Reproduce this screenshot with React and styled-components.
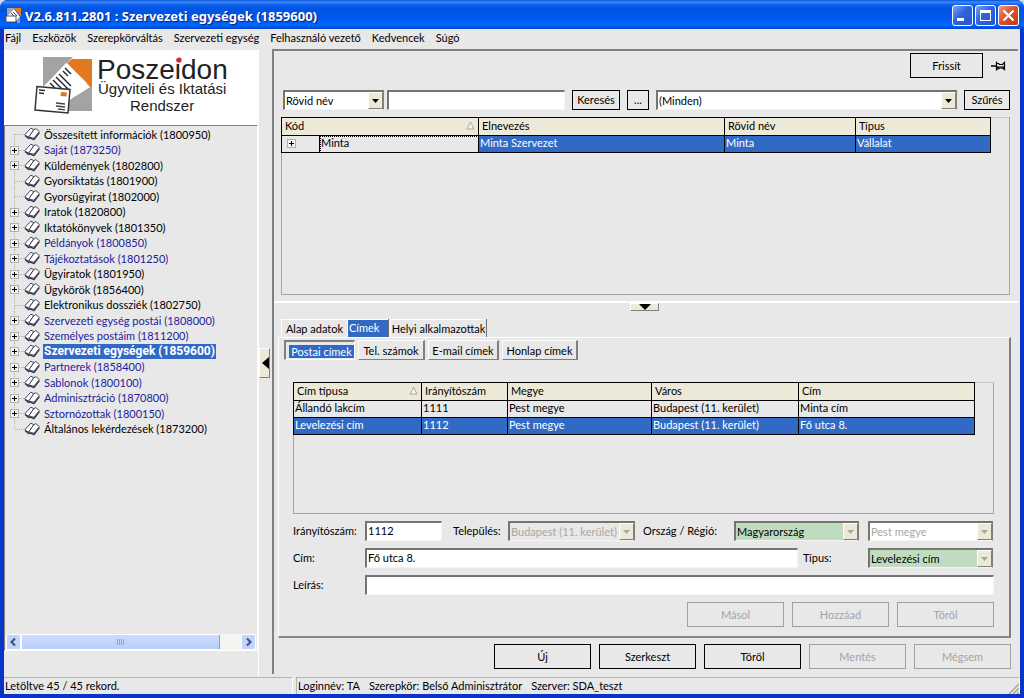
import React from "react";
import styled, { createGlobalStyle, css } from "styled-components";

const face = "#e8e8e8";
const header = "#ece9d8";
const blue = "#316ac5";
const sans = `Lato, "Liberation Sans", Arial, sans-serif`;

const Global = createGlobalStyle`
  * { box-sizing: border-box; }
  body { margin: 0; background: #c9dcf2; font: 11px/14px ${sans}; color: #000; }
  button, input, select { font: inherit; color: inherit; margin: 0; border-radius: 0; }
`;

const Window = styled.div`
  min-height: 100vh;
  display: flex;
  flex-direction: column;
  background: #0a34c8;
  border-radius: 8px 8px 0 0;
  overflow: hidden;
`;

const TitleBar = styled.header`
  height: 29px;
  display: flex;
  align-items: center;
  gap: 4px;
  padding: 2px 5px 0 6px;
  background: linear-gradient(#0a4fd0 0, #3a8bff 2px, #0a5eea 5px, #0054e3 9px, #0058ee 18px, #0067ff 25px, #0048d0 29px);
`;

const Title = styled.h1`
  flex: 1;
  margin: 0;
  font: bold 13px/16px "Noto Sans", sans-serif;
  color: #fff;
  text-shadow: 1px 1px 1px #0a1e78;
  white-space: nowrap;
`;

const CaptionButtons = styled.div`
  display: flex;
  gap: 2px;
`;

const CaptionButton = styled.button`
  width: 21px;
  height: 21px;
  padding: 0;
  border: 1px solid #fff;
  border-radius: 3px;
  background: ${(p) =>
    p.$close
      ? "linear-gradient(135deg, #f09a80, #e0512c 45%, #c03a18)"
      : "linear-gradient(135deg, #7da6f5, #2f62dd 45%, #2456d0)"};
  svg { display: block; }
`;

const Client = styled.div`
  flex: 1;
  display: flex;
  flex-direction: column;
  margin: 0 4px 4px;
  background: ${face};
`;

const MenuBar = styled.nav`
  height: 20px;
  display: flex;
  align-items: center;
  gap: 11px;
  padding: 0 1px 2px;
`;

const MenuItem = styled.button`
  padding: 0;
  border: 0;
  background: none;
  white-space: nowrap;
`;

const Body = styled.div`
  flex: 1;
  display: flex;
`;

const Sidebar = styled.aside`
  width: 254px;
  flex: none;
  display: flex;
  flex-direction: column;
  padding: 1px 0 26px;
`;

const Logo = styled.div`
  height: 75px;
  background: #fff;
  svg { display: block; }
`;

const TreePanel = styled.div`
  flex: 1;
  display: flex;
  flex-direction: column;
  justify-content: space-between;
  border: 1px solid #fff;
  border-top-color: #808080;
  border-left-color: #808080;
  padding: 0 1px;
`;

const Tree = styled.ul`
  margin: 0;
  padding: 0;
  list-style: none;
`;

const TreeRow = styled.li`
  height: 16px;
  display: flex;
  align-items: center;
  overflow: hidden;
  &:nth-child(even) { height: 15px; }
  > svg { flex: none; }
`;

const TreeLink = styled.a`
  margin-left: 3px;
  padding: 0 1px;
  line-height: 15px;
  text-decoration: none;
  white-space: nowrap;
  color: ${(p) => (p.$marked ? "#1c1c9c" : "#000")};
  ${(p) =>
    p.$selected &&
    css`
      background: ${blue};
      color: #fff;
      font-family: Roboto, sans-serif;
      font-weight: bold;
      font-size: 12px;
    `}
`;

const ScrollBar = styled.div`
  height: 16px;
  display: flex;
  background: #f4f4f0;
`;

const ScrollButton = styled.button`
  width: 15px;
  height: 16px;
  padding: 0;
  border: 1px solid #fff;
  border-radius: 2px;
  background: #c3d4fb;
  svg { display: block; }
`;

const ScrollTrack = styled.div`
  flex: 1;
  padding-right: 21px;
`;

const ScrollThumb = styled.div`
  height: 16px;
  display: flex;
  align-items: center;
  justify-content: center;
  gap: 1px;
  border: 1px solid #fff;
  border-right-color: #7f9be0;
  border-radius: 2px;
  background: linear-gradient(#cbdcff, #b9cefb);
`;

const Grip = styled.span`
  width: 1px;
  height: 6px;
  background: #8ca6e4;
`;

const Splitter = styled.div`
  width: 14px;
  flex: none;
  display: flex;
  align-items: center;
  border-left: 1px solid #fff;
`;

const SideHandle = styled.button`
  width: 11px;
  height: 30px;
  padding: 0;
  border: 1px solid #fff;
  border-right-color: #808080;
  border-bottom-color: #808080;
  background: ${header};
  svg { display: block; }
`;

const Main = styled.main`
  flex: 1;
  min-width: 0;
  display: flex;
  flex-direction: column;
  margin: 0 2px 3px 0;
  border-top: 2px solid #808080;
  border-left: 2px solid #808080;
`;

const TopPane = styled.section`
  flex: 1;
  display: flex;
  flex-direction: column;
  padding: 2px 8px 6px 7px;
  border-bottom: 2px solid #fff;
`;

const RefreshBar = styled.div`
  display: flex;
  justify-content: flex-end;
  align-items: center;
  gap: 8px;
  padding-right: 4px;
  margin-bottom: 12px;
`;

const SearchBar = styled.form`
  display: flex;
  gap: 7px;
  padding-left: 2px;
  margin-bottom: 7px;
`;

const SearchFields = styled.div`
  display: flex;
  gap: 3px;
`;

const Button = styled.button`
  flex: none;
  width: ${(p) => p.$width}px;
  height: ${(p) => (p.$small ? 20 : 25)}px;
  padding: 0;
  border: 1px solid #000;
  background: ${face};
  text-align: center;
  white-space: nowrap;
  &:disabled {
    color: #a4a4a4;
    border-color: #a0a0a0;
  }
`;

const sunken = css`
  height: 20px;
  border: 1px solid #f4f4f0;
  border-top: 2px solid #75756c;
  border-left: 2px solid #75756c;
`;

const TextBox = styled.input`
  ${sunken}
  width: ${(p) => (p.$width ? p.$width + "px" : "auto")};
  flex: ${(p) => (p.$width ? "none" : "1")};
  min-width: 0;
  padding: 0 1px 2px;
  background: #fff;
`;

const Combo = styled.span`
  ${sunken}
  border-right-color: #808078;
  flex: ${(p) => (p.$width ? "none" : "1")};
  width: ${(p) => (p.$width ? p.$width + "px" : "auto")};
  display: grid;
  grid-template-columns: 1fr 15px;
  background: ${(p) => p.$fill || "#fff"};
`;

const ComboSelect = styled.select`
  grid-area: 1 / 1 / 2 / 3;
  appearance: none;
  min-width: 0;
  padding: 0 14px 0 1px;
  border: 0;
  background: transparent;
  color: ${(p) => (p.$faded ? "#a8a8a0" : "#000")};
  opacity: 1;
`;

const ComboArrow = styled.span`
  grid-area: 1 / 2;
  display: flex;
  align-items: center;
  justify-content: center;
  pointer-events: none;
  border: 1px solid #fff;
  border-right-color: #808078;
  border-bottom-color: #808078;
  background: ${header};
`;

const GridBox = styled.div`
  flex: ${(p) => (p.$height ? "none" : "1")};
  height: ${(p) => (p.$height ? p.$height + "px" : "auto")};
  min-height: 80px;
  border: 1px solid #a8a4a4;
  border-top-color: #c8c4c4;
`;

const Grid = styled.table`
  width: calc(100% - 17px);
  margin: -1px 0 0 -1px;
  table-layout: fixed;
  border-collapse: collapse;
  th, td {
    border: 1px solid #000;
    font-weight: normal;
    text-align: left;
    overflow: hidden;
    white-space: nowrap;
  }
  th {
    height: 18px;
    padding: 0 3px 2px;
    background: ${header};
  }
  td {
    height: 17px;
    padding: 0 1px 2px;
  }
`;

const Row = styled.tr`
  ${(p) =>
    p.$selected &&
    css`
      background: ${blue};
      color: #fff;
    `}
`;

const PlainCell = styled.td`
  background: ${face};
  color: #000;
  ${(p) => p.$focused && "outline: 1px dotted #000; outline-offset: -1px;"}
`;

const HeaderText = styled.div`
  display: flex;
  justify-content: space-between;
  align-items: center;
`;

const Expander = styled.button`
  display: block;
  width: 9px;
  height: 9px;
  margin-left: ${(p) => (p.$inset ? 4 : 0)}px;
  padding: 0;
  border: 0;
  background: none;
  svg { display: block; }
`;

const BottomPane = styled.section`
  display: flex;
  flex-direction: column;
  padding: 0 7px 5px 4px;
`;

const DownHandle = styled.button`
  align-self: center;
  width: 29px;
  height: 8px;
  padding: 0;
  margin-bottom: 8px;
  border: 1px solid #fff;
  border-right-color: #808080;
  border-bottom-color: #808080;
  background: ${header};
  svg { display: block; margin: 0 auto; }
`;

const Tabs = styled.div`
  display: flex;
  padding-left: 3px;
`;

const Tab = styled.button`
  width: ${(p) => p.$width}px;
  height: 18px;
  padding: 0;
  border: solid #fff;
  border-width: 1px 0 0 1px;
  background: ${face};
  line-height: 14px;
  white-space: nowrap;
  box-shadow: ${(p) => (p.$last ? "1px 0 #707070" : "none")};
  ${(p) =>
    p.$selected &&
    css`
      padding: 0 0 2px 1px;
      text-align: left;
      background: ${blue};
      color: #fff;
      box-shadow: 1px 0 #707070;
      margin-right: 2px;
    `}
`;

const TabPanel = styled.div`
  display: flex;
  flex-direction: column;
  padding: 2px 15px 9px 14px;
  border: 1px solid #fff;
  border-right: 2px solid #857a80;
  border-bottom: 2px solid #858585;
  margin-bottom: 6px;
`;

const SubTabs = styled.div`
  display: flex;
  gap: 3px;
  margin: 0 0 22px -9px;
`;

const SubTab = styled.button`
  width: ${(p) => p.$width}px;
  height: 20px;
  padding: 2px 0 0;
  border: 1px solid #fff;
  border-right: 2px solid #808080;
  border-bottom: 1px solid #808080;
  background: ${face};
  white-space: nowrap;
  ${(p) =>
    p.$selected &&
    css`
      padding: 2px 0 0 1px;
      border: 2px solid #808080;
      border-right: 1px solid #fff;
      border-bottom: 1px solid #fff;
      span {
        display: block;
        margin: 0 0 0 2px;
        background: ${blue};
        color: #fff;
        line-height: 13px;
      }
    `}
`;

const Form = styled.form`
  display: flex;
  flex-direction: column;
  gap: 7px;
  padding-top: 7px;
`;

const FieldRow = styled.div`
  display: flex;
  align-items: center;
  padding-right: ${(p) => (p.$wide ? 0 : 1)}px;
`;

const Label = styled.label`
  flex: none;
  width: ${(p) => p.$width}px;
  padding-left: ${(p) => p.$indent || 0}px;
  white-space: nowrap;
`;

const Region = styled.div`
  display: flex;
  margin-left: 9px;
`;

const Buttons = styled.div`
  display: flex;
  justify-content: flex-end;
  gap: 8px;
`;

const StatusBar = styled.footer`
  height: 17px;
  display: flex;
  gap: 3px;
`;

const StatusCell = styled.div`
  width: ${(p) => (p.$width ? p.$width + "px" : "auto")};
  flex: ${(p) => (p.$width ? "none" : "1")};
  display: flex;
  align-items: center;
  gap: 9px;
  padding-left: 1px;
  border-top: 1px solid #b4b4a8;
  border-right: 1px solid #fff;
  border-left: ${(p) => (p.$width ? "0" : "1px solid #b4b4a8")};
  white-space: nowrap;
  svg { margin-left: auto; align-self: flex-end; }
`;

const PlusBox = () => (
  <svg width="9" height="9" viewBox="0 0 9 9" shapeRendering="crispEdges">
    <rect x="0.5" y="0.5" width="8" height="8" fill="#f4f4f4" stroke="#b0b0b0" />
    <path d="M2 4.5h5M4.5 2v5" stroke="#000" />
  </svg>
);

const Branch = styled.span`
  width: 14px;
  height: 16px;
  flex: none;
  display: grid;
  margin-left: 4px;
  > svg { grid-area: 1 / 1; }
  > button { grid-area: 1 / 1; margin-top: 4px; }
`;

const BranchLines = ({ first, last }) => (
  <svg width="14" height="16" viewBox="0 0 14 16" shapeRendering="crispEdges">
    <path
      d={`M4.5 ${first ? 8 : 0}V${last ? 8 : 16}M4.5 8.5H14`}
      stroke="#b4b4b4"
      strokeDasharray="1 1"
      fill="none"
    />
  </svg>
);

const BookIcon = () => (
  <svg width="16" height="14" viewBox="0 0 16 14" strokeLinejoin="round">
    <path d="M1 8.400 4.600 11.600 5.800 10.800 10 12.600 15.300 5.600" fill="none" stroke="#34344c" strokeWidth="1.400" />
    <path d="M0.800 7.800 6.800 1.200 9.800 2.600 4.600 10.200z" fill="#fff" stroke="#34344c" strokeWidth="0.900" />
    <path d="M4.800 10 9.800 2.800 11.800 1.600 15.400 4.600 9.900 11.200z" fill="#fff" stroke="#34344c" strokeWidth="0.900" />
  </svg>
);

const Triangle = ({ color = "#000" }) => (
  <svg width="7" height="4" viewBox="0 0 7 4">
    <path d="M0 0h7L3.500 4z" fill={color} />
  </svg>
);

const SortMark = () => (
  <svg width="9" height="9" viewBox="0 0 9 9">
    <path d="M4.500 1 1 8h7z" fill="#f6f4ea" stroke="#aca899" />
  </svg>
);

const PinIcon = () => (
  <svg width="15" height="12" viewBox="0 0 15 12">
    <path d="M0 6h5" stroke="#000" strokeWidth="1.500" />
    <path d="M5.500 1.500v9M5.500 3.500h2l1 1h3l2-2v7l-2-1.500h-3l-1 1h-2" stroke="#000" strokeWidth="1.200" fill="none" />
    <path d="M6 6.500h7v2.500l-1.500-1.500H8l-1 1H6z" fill="#000" />
  </svg>
);

const AppIcon = () => (
  <svg width="15" height="15" viewBox="0 0 15 15">
    <path d="M1 0h8L1 8z" fill="#a4a4a4" />
    <path d="M8 0h7v9z" fill="#e87a1c" />
    <path d="M1 8 8 1l6 8-5 5z" fill="#fff" />
    <path d="M5 5l4 4M7 4l4 4" stroke="#444" />
    <path d="M0 8h10v6H0z" fill="#fff" stroke="#333" strokeWidth="0.8" />
    <path d="M11 12l3-3v6h-3z" fill="#9a9a9a" />
  </svg>
);

const PoszeidonLogo = () => (
  <svg width="254" height="75" viewBox="0 0 254 75" fontFamily="Liberation Sans, Arial, sans-serif" fill="#222">
    <path d="M39 7h30L39 37z" fill="#a3a3a3" />
    <path d="M68 9h20v30L63 13z" fill="#e2791f" />
    <path d="M88 36v25H62V52z" fill="#a3a3a3" />
    <path d="M39 38 62 13 83 33 64 52z" fill="#fff" />
    <path
      d="M61 18l6 6M59 21l5 5M55 24l12 12M52 27l12 12M49 30l9 9M46 33l5 5"
      stroke="#2c2c3c"
      strokeWidth="1.500"
    />
    <path d="M33 36.500 66 39.500 64 63 31 60z" fill="#fff" stroke="#333" strokeWidth="1.500" />
    <path d="M35 40l6 .6M35 43l5 .5" stroke="#333" strokeWidth="1.500" />
    <path d="M57 42l6 .6-.5 4-6-.6z" fill="#e2791f" />
    <path d="M52 53l9 1M52 56l9 1M54 59l7 .8" stroke="#444" strokeWidth="1.300" />
    <text x="93" y="29" fontSize="28">Poszeidon</text>
    <text x="94" y="44" fontSize="15">Ügyviteli és Iktatási</text>
    <text x="126" y="61" fontSize="15">Rendszer</text>
    <circle cx="175" cy="10" r="2.600" fill="#d8203c" />
  </svg>
);

const tree = [
  { text: "Összesített információk (1800950)" },
  { text: "Saját (1873250)", plus: true, marked: true },
  { text: "Küldemények (1802800)", plus: true },
  { text: "Gyorsiktatás (1801900)" },
  { text: "Gyorsügyirat (1802000)" },
  { text: "Iratok (1820800)", plus: true },
  { text: "Iktatókönyvek (1801350)", plus: true },
  { text: "Példányok (1800850)", plus: true, marked: true },
  { text: "Tájékoztatások (1801250)", plus: true, marked: true },
  { text: "Ügyiratok (1801950)", plus: true },
  { text: "Ügykörök (1856400)", plus: true },
  { text: "Elektronikus dossziék (1802750)" },
  { text: "Szervezeti egység postái (1808000)", plus: true, marked: true },
  { text: "Személyes postáim (1811200)", plus: true, marked: true },
  { text: "Szervezeti egységek (1859600)", plus: true, selected: true },
  { text: "Partnerek (1858400)", plus: true, marked: true },
  { text: "Sablonok (1800100)", plus: true, marked: true },
  { text: "Adminisztráció (1870800)", plus: true, marked: true },
  { text: "Sztornózottak (1800150)", plus: true, marked: true },
  { text: "Általános lekérdezések (1873200)" },
];

const menus = ["Fájl", "Eszközök", "Szerepkörváltás", "Szervezeti egység", "Felhasználó vezető", "Kedvencek", "Súgó"];

const addresses = [
  ["Állandó lakcím", "1111", "Pest megye", "Budapest (11. kerület)", "Minta cím"],
  ["Levelezési cím", "1112", "Pest megye", "Budapest (11. kerület)", "Fő utca 8."],
];

function ComboBox({ id, label, value, width, fill, faded, disabled }) {
  return (
    <Combo $width={width} $fill={fill}>
      <ComboSelect id={id} aria-label={label} $faded={faded} disabled={disabled}>
        <option>{value}</option>
      </ComboSelect>
      <ComboArrow>
        <Triangle color={disabled ? "#aca899" : "#000"} />
      </ComboArrow>
    </Combo>
  );
}

export default function App() {
  return (
    <Window>
      <Global />
      <TitleBar>
        <AppIcon />
        <Title>V2.6.811.2801 : Szervezeti egységek (1859600)</Title>
        <CaptionButtons>
          <CaptionButton aria-label="Kis méret">
            <svg width="19" height="19"><path d="M4 13.500h7" stroke="#fff" strokeWidth="3" /></svg>
          </CaptionButton>
          <CaptionButton aria-label="Teljes méret">
            <svg width="19" height="19">
              <rect x="4.500" y="5.500" width="10" height="9" fill="none" stroke="#fff" />
              <path d="M4 5.500h11" stroke="#fff" strokeWidth="3" />
            </svg>
          </CaptionButton>
          <CaptionButton $close aria-label="Bezárás">
            <svg width="19" height="19"><path d="M4.500 4.500l10 10M14.500 4.500l-10 10" stroke="#fff" strokeWidth="2.200" /></svg>
          </CaptionButton>
        </CaptionButtons>
      </TitleBar>
      <Client>
        <MenuBar>
          {menus.map((m) => (
            <MenuItem key={m}>{m}</MenuItem>
          ))}
        </MenuBar>
        <Body>
          <Sidebar>
            <Logo>
              <PoszeidonLogo />
            </Logo>
            <TreePanel>
              <Tree>
                {tree.map((n, i) => (
                  <TreeRow key={n.text}>
                    <Branch>
                      <BranchLines first={i === 0} last={i === tree.length - 1} />
                      {n.plus && (
                        <Expander aria-label="Kibontás">
                          <PlusBox />
                        </Expander>
                      )}
                    </Branch>
                    <BookIcon />
                    <TreeLink href="#" $marked={n.marked} $selected={n.selected}>
                      {n.text}
                    </TreeLink>
                  </TreeRow>
                ))}
              </Tree>
              <ScrollBar>
                <ScrollButton aria-label="Balra">
                  <svg width="13" height="14"><path d="M8 3.500 4.500 7 8 10.500" fill="none" stroke="#3c5080" strokeWidth="2" /></svg>
                </ScrollButton>
                <ScrollTrack>
                  <ScrollThumb>
                    <Grip />
                    <Grip />
                    <Grip />
                    <Grip />
                  </ScrollThumb>
                </ScrollTrack>
                <ScrollButton aria-label="Jobbra">
                  <svg width="13" height="14"><path d="M5 3.500 8.500 7 5 10.500" fill="none" stroke="#3c5080" strokeWidth="2" /></svg>
                </ScrollButton>
              </ScrollBar>
            </TreePanel>
          </Sidebar>
          <Splitter>
            <SideHandle aria-label="Fa elrejtése">
              <svg width="9" height="28"><path d="M9 8v12L2 14z" fill="#000" /></svg>
            </SideHandle>
          </Splitter>
          <Main>
            <TopPane>
              <RefreshBar>
                <Button $width={73}>Frissít</Button>
                <PinIcon />
              </RefreshBar>
              <SearchBar onSubmit={(e) => e.preventDefault()}>
                <SearchFields>
                  <ComboBox width={101} label="Keresési mező" value="Rövid név" />
                  <TextBox $width={178} aria-label="Keresett szöveg" />
                </SearchFields>
                <Button $small $width={48}>Keresés</Button>
                <Button $small $width={22} type="button">...</Button>
                <ComboBox label="Szűrő" value="(Minden)" />
                <Button $small $width={46} type="button">Szűrés</Button>
              </SearchBar>
              <GridBox>
                <Grid>
                  <colgroup>
                    <col width="38" />
                    <col width="159" />
                    <col width="246" />
                    <col width="131" />
                    <col />
                  </colgroup>
                  <thead>
                    <tr>
                      <th colSpan="2">
                        <HeaderText>
                          Kód <SortMark />
                        </HeaderText>
                      </th>
                      <th>Elnevezés</th>
                      <th>Rövid név</th>
                      <th>Típus</th>
                    </tr>
                  </thead>
                  <tbody>
                    <Row $selected>
                      <PlainCell>
                        <Expander $inset aria-label="Kibontás">
                          <PlusBox />
                        </Expander>
                      </PlainCell>
                      <PlainCell $focused>Minta</PlainCell>
                      <td>Minta Szervezet</td>
                      <td>Minta</td>
                      <td>Vállalat</td>
                    </Row>
                  </tbody>
                </Grid>
              </GridBox>
            </TopPane>
            <BottomPane>
              <DownHandle aria-label="Részletek elrejtése">
                <svg width="12" height="6"><path d="M0 0h12L6 6z" fill="#000" /></svg>
              </DownHandle>
              <Tabs role="tablist">
                <Tab role="tab" $width={66}>Alap adatok</Tab>
                <Tab role="tab" aria-selected="true" $selected $width={41}>Címek</Tab>
                <Tab role="tab" $last $width={96}>Helyi alkalmazottak</Tab>
              </Tabs>
              <TabPanel>
                <SubTabs role="tablist">
                  <SubTab role="tab" aria-selected="true" $selected $width={71}>
                    <span>Postai címek</span>
                  </SubTab>
                  <SubTab role="tab" $width={67}>Tel. számok</SubTab>
                  <SubTab role="tab" $width={71}>E-mail címek</SubTab>
                  <SubTab role="tab" $width={76}>Honlap címek</SubTab>
                </SubTabs>
                <GridBox $height={132}>
                  <Grid>
                    <colgroup>
                      <col width="128" />
                      <col width="86" />
                      <col width="144" />
                      <col width="147" />
                      <col />
                    </colgroup>
                    <thead>
                      <tr>
                        <th>
                          <HeaderText>
                            Cím típusa <SortMark />
                          </HeaderText>
                        </th>
                        <th>Irányítószám</th>
                        <th>Megye</th>
                        <th>Város</th>
                        <th>Cím</th>
                      </tr>
                    </thead>
                    <tbody>
                      {addresses.map((r, i) => (
                        <Row key={r[0]} $selected={i === 1}>
                          {r.map((c) => (
                            <td key={c}>{c}</td>
                          ))}
                        </Row>
                      ))}
                    </tbody>
                  </Grid>
                </GridBox>
                <Form onSubmit={(e) => e.preventDefault()}>
                  <FieldRow>
                    <Label htmlFor="zip" $width={72}>Irányítószám:</Label>
                    <TextBox id="zip" $width={77} defaultValue="1112" />
                    <Label htmlFor="city" $width={66} $indent={11}>Település:</Label>
                    <ComboBox id="city" value="Budapest (11. kerület)" fill={face} faded disabled />
                    <Label htmlFor="country" $width={99} $indent={8}>Ország / Régió:</Label>
                    <ComboBox id="country" width={125} value="Magyarország" fill="#c0dcc0" disabled />
                    <Region>
                      <ComboBox label="Régió" width={125} value="Pest megye" faded disabled />
                    </Region>
                  </FieldRow>
                  <FieldRow>
                    <Label htmlFor="address" $width={72}>Cím:</Label>
                    <TextBox id="address" defaultValue="Fő utca 8." />
                    <Label htmlFor="kind" $width={70} $indent={5}>Típus:</Label>
                    <ComboBox id="kind" width={125} value="Levelezési cím" fill="#c0dcc0" disabled />
                  </FieldRow>
                  <FieldRow $wide>
                    <Label htmlFor="note" $width={72}>Leírás:</Label>
                    <TextBox id="note" />
                  </FieldRow>
                  <Buttons>
                    <Button $width={97} disabled>Másol</Button>
                    <Button $width={97} disabled>Hozzáad</Button>
                    <Button $width={97} disabled>Töröl</Button>
                  </Buttons>
                </Form>
              </TabPanel>
              <Buttons>
                <Button $width={97}>Új</Button>
                <Button $width={97}>Szerkeszt</Button>
                <Button $width={97}>Töröl</Button>
                <Button $width={97} disabled>Mentés</Button>
                <Button $width={97} disabled>Mégsem</Button>
              </Buttons>
            </BottomPane>
          </Main>
        </Body>
        <StatusBar>
          <StatusCell $width={289}>Letöltve 45 / 45 rekord.</StatusCell>
          <StatusCell>
            <span>Loginnév: TA</span>
            <span>Szerepkör: Belső Adminisztrátor</span>
            <span>Szerver: SDA_teszt</span>
            <svg width="12" height="12">
              <path d="M2 12 12 2M6 12l6-6M10 12l2-2" stroke="#a8a890" strokeWidth="1.500" />
            </svg>
          </StatusCell>
        </StatusBar>
      </Client>
    </Window>
  );
}
